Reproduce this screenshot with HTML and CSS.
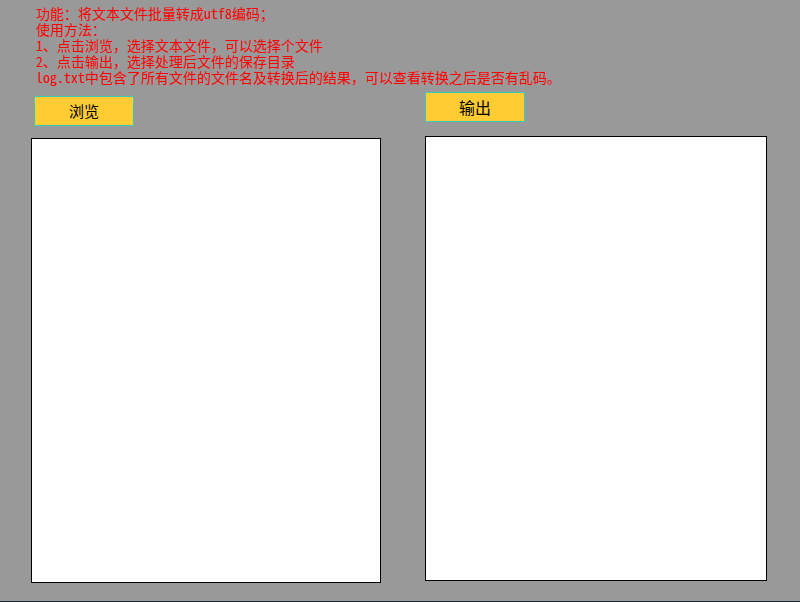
FILE: index.html
```html
<!DOCTYPE html>
<html lang="zh-CN">
<head>
<meta charset="utf-8">
<title>批量转码</title>
<link rel="stylesheet" href="styles.css">
</head>
<body>
<div class="window">
  <div class="intro">
    <p>功能：将文本文件批量转成utf8编码；</p>
    <p>使用方法：</p>
    <p>1、点击浏览，选择文本文件，可以选择个文件</p>
    <p>2、点击输出，选择处理后文件的保存目录</p>
    <p>log.txt中包含了所有文件的文件名及转换后的结果，可以查看转换之后是否有乱码。</p>
  </div>
  <div class="panes">
    <div class="pane pane-src">
      <button class="btn btn-browse" type="button">浏览</button>
      <div class="list list-src"></div>
    </div>
    <div class="pane pane-out">
      <button class="btn btn-out" type="button">输出</button>
      <div class="list list-out"></div>
    </div>
  </div>
  <div class="statusline"></div>
</div>
</body>
</html>
```

FILE: styles.css
```css
html, body {
  margin: 0;
  padding: 0;
  background: #999999;
}

.window {
  width: 800px;
  height: 602px;
  display: flex;
  flex-direction: column;
  font-family: "Noto Sans Mono CJK SC", "Noto Sans CJK SC", monospace;
}

.intro {
  padding: 5px 0 0 36px;
  color: #ff0000;
  font-size: 14px;
  line-height: 16px;
}

.intro p {
  margin: 0;
  white-space: nowrap;
}

.panes {
  display: flex;
  flex: 1;
}

.pane {
  display: flex;
  flex-direction: column;
  align-items: flex-start;
}

.pane-src {
  margin-left: 31px;
  padding-top: 11px;
}

.pane-out {
  margin-left: 44px;
  padding-top: 7px;
}

.btn {
  box-sizing: border-box;
  width: 100px;
  height: 30px;
  padding: 0;
  background: #ffcc33;
  border: 1px solid #3fc9b6;
  border-radius: 0;
  color: #000000;
  font-family: "Noto Sans CJK SC", sans-serif;
  font-size: 15px;
  line-height: 26px;
  text-align: center;
}

.btn-browse {
  margin-left: 3px;
}

.btn-out {
  font-size: 16px;
}

.list {
  box-sizing: border-box;
  background: #ffffff;
  border: 1px solid #000000;
  margin-top: 12px;
  height: 445px;
}

.list-src {
  width: 350px;
}

.list-out {
  width: 342px;
  margin-top: 14px;
}

.statusline {
  height: 1px;
  background: #1c2a38;
}
```
